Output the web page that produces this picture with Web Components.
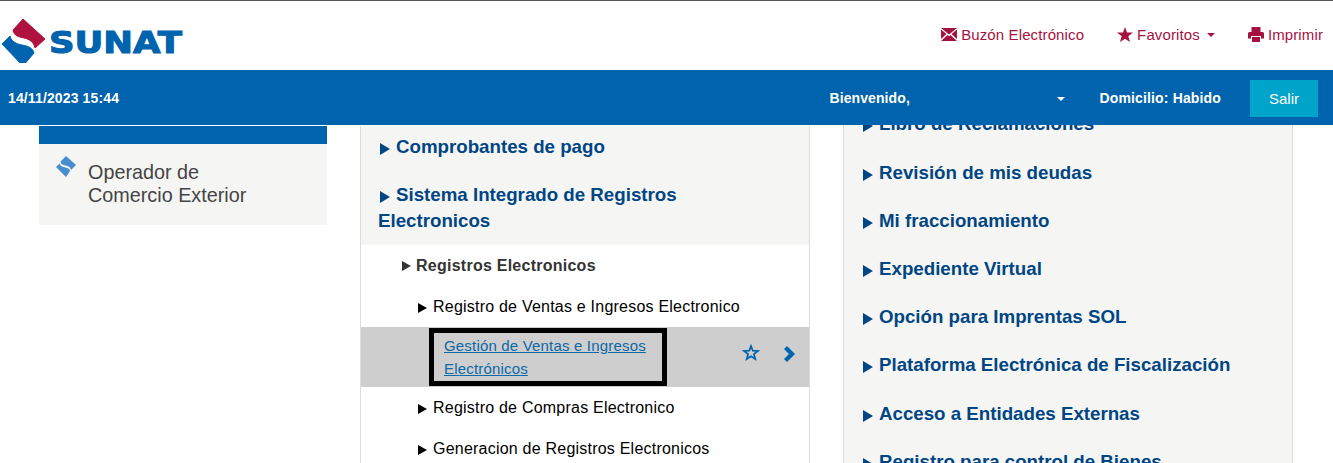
<!DOCTYPE html>
<html>
<head>
<meta charset="utf-8">
<title>SUNAT Operaciones en Linea</title>
<style>
    html, body { margin: 0; height: 463px; overflow: hidden; background: #fff; }
    body { font-family: "Liberation Sans", Arial, sans-serif; }
</style>
</head>
<body>
<sunat-header></sunat-header>
<menu-page>
    <side-card slot="left">Operador de<br>Comercio Exterior</side-card>

    <menu-column slot="middle">
        <menu-group>
            <menu-item level="1">Comprobantes de pago</menu-item>
            <menu-item level="1" last>Sistema Integrado de Registros Electronicos</menu-item>
        </menu-group>
        <menu-item level="2">Registros Electronicos</menu-item>
        <menu-item level="3">Registro de Ventas e Ingresos Electronico</menu-item>
        <active-row>Gestión de Ventas e Ingresos Electrónicos</active-row>
        <menu-item level="3">Registro de Compras Electronico</menu-item>
        <menu-item level="3">Generacion de Registros Electronicos</menu-item>
    </menu-column>

    <menu-column slot="right" panel>
        <menu-item level="1" side>Libro de Reclamaciones</menu-item>
        <menu-item level="1" side>Revisión de mis deudas</menu-item>
        <menu-item level="1" side>Mi fraccionamiento</menu-item>
        <menu-item level="1" side>Expediente Virtual</menu-item>
        <menu-item level="1" side>Opción para Imprentas SOL</menu-item>
        <menu-item level="1" side>Plataforma Electrónica de Fiscalización</menu-item>
        <menu-item level="1" side>Acceso a Entidades Externas</menu-item>
        <menu-item level="1" side>Registro para control de Bienes</menu-item>
    </menu-column>
</menu-page>

<script>
    // Top bar, laid over the scrolled page
    customElements.define('sunat-header', class extends HTMLElement {
        constructor() {
            super();
            const shadow = this.attachShadow({ mode: 'open' });
            shadow.innerHTML = `
            <style>
                :host { display: block; position: fixed; top: 0; left: 0; right: 0; z-index: 10; background: #fff; color: #a6123f; }
                .top { height: 69px; border-top: 1px solid #555; display: flex; justify-content: space-between; align-items: center; padding-right: 10px; }
                .logo { display: block; margin-top: -1px; }
                .links { display: flex; align-items: center; margin-top: -2px; font-size: 15px; letter-spacing: .12px; }
                .links span { display: flex; align-items: center; }
                .links svg { display: block; margin-right: 4px; }
                .mail { margin-right: 33px; }
                .fav { margin-right: 33px; }
                .caret { width: 0; height: 0; border: 4px solid transparent; border-top-color: currentColor; border-bottom: 0; margin-left: 7px; }
                .bar { height: 55px; background: #0063ad; color: #fff; font-weight: bold; font-size: 14px; display: flex; align-items: center; padding: 0 15px 0 8px; }
                .date { flex: 1; letter-spacing: .13px; }
                .welcome { width: 228px; letter-spacing: .1px; }
                .caret2 { width: 0; height: 0; border: 4px solid transparent; border-top-color: #fff; border-bottom: 0; margin-right: 34px; margin-top: 2px; }
                .dom { margin-right: 29px; letter-spacing: .15px; }
                .salir { width: 68px; height: 37px; background: #00a3c9; display: flex; align-items: center; justify-content: center; font-weight: normal; font-size: 15px; margin-top: 1px; }
            </style>
            <div class="top">
                <svg class="logo" width="190" height="56" viewBox="0 0 190 56">
                    <path fill="#b0123f" stroke="#b0123f" stroke-linejoin="round" d="M23 12 45 32 35 41C34 35 29 32 24 31 19 30 14 29 13 23Z"/>
                    <path fill="#0063ad" stroke="#0063ad" stroke-linejoin="round" d="M2 37 10 29C11 34 16 37 22 38 28 39 33 41 34 46L23 59Z"/>
                    <text x="49" y="46" font-family="DejaVu Sans" font-weight="bold" font-size="31" fill="#0063ad" stroke="#0063ad" stroke-width="1.100" textLength="133" lengthAdjust="spacingAndGlyphs">SUNAT</text>
                </svg>
                <div class="links">
                    <span class="mail">
                        <svg width="16" height="13" viewBox="0 0 16 13"><path fill="currentColor" d="M0 0H16L8 6.500ZM0 1.500 5.500 6 0 11ZM16 1.500V11L10.500 6ZM0 13 6.500 7 8 8.300 9.500 7 16 13Z"/></svg>
                        Buzón Electrónico
                    </span>
                    <span class="fav">
                        <svg width="16" height="15" viewBox="0 0 16 15"><path fill="currentColor" d="M8 0 10 5.400 16 5.600 11.300 9.200 13 15 8 11.700 3 15 4.700 9.200 0 5.600 6 5.400Z"/></svg>
                        Favoritos<i class="caret"></i>
                    </span>
                    <span>
                        <svg width="16" height="15" viewBox="0 0 16 15"><path fill="currentColor" fill-rule="evenodd" d="M3.500 0H12.500V5H3.500ZM1.500 5H14.500Q16 5 16 6.500V11.500H13V9H3V11.500H0V6.500Q0 5 1.500 5ZM4 10H12V15H4Z"/></svg>
                        Imprimir
                    </span>
                </div>
            </div>
            <div class="bar">
                <span class="date">14/11/2023 15:44</span>
                <span class="welcome">Bienvenido,</span>
                <i class="caret2"></i>
                <span class="dom">Domicilio: Habido</span>
                <span class="salir">Salir</span>
            </div>`;
        }
    });

    // Three columns under the bar
    customElements.define('menu-page', class extends HTMLElement {
        constructor() {
            super();
            const shadow = this.attachShadow({ mode: 'open' });
            shadow.innerHTML = `
            <style>
                :host { display: grid; grid-template-columns: 288px 450px 450px; column-gap: 33px; padding: 126px 0 0 39px; align-items: start; }
            </style>
            <slot name="left"></slot>
            <slot name="middle"></slot>
            <slot name="right"></slot>`;
        }
    });

    // Blue headed card on the left
    customElements.define('side-card', class extends HTMLElement {
        constructor() {
            super();
            const shadow = this.attachShadow({ mode: 'open' });
            shadow.innerHTML = `
            <style>
                :host { display: block; background: #f5f5f3; color: #444; font-size: 19.800px; line-height: 22.500px; }
                .head { height: 18px; background: #0063ad; }
                .body { display: flex; height: 81px; padding: 12px 0 0 17px; box-sizing: border-box; }
                svg { display: block; flex: none; margin-right: 11px; }
                p { margin: 5px 0 0; }
            </style>
            <div class="head"></div>
            <div class="body">
                <svg width="21" height="22" viewBox="0 0 21 22">
                    <path fill="#478ecf" d="M10 0 20 9 15 14C14.500 11 12 10 9.500 9.500 7 9 5 8.500 4.500 5.500ZM0 11 3.500 7.500C4 10 6.500 11 9.500 11.500 12 12 14 13 14 15L10 21Z"/>
                </svg>
                <p><slot></slot></p>
            </div>`;
        }
    });

    // Column of menu rows, white or panel grey
    customElements.define('menu-column', class extends HTMLElement {
        constructor() {
            super();
            const shadow = this.attachShadow({ mode: 'open' });
            shadow.innerHTML = `
            <style>
                :host { display: block; border: solid #ddd; border-width: 0 1px; height: 337px; overflow: hidden; }
                :host([panel]) { background: #f5f5f3; margin-top: -25.600px; height: 363px; }
            </style>
            <slot></slot>`;
        }
    });

    // Grey block at the head of a column
    customElements.define('menu-group', class extends HTMLElement {
        constructor() {
            super();
            const shadow = this.attachShadow({ mode: 'open' });
            shadow.innerHTML = `
            <style>
                :host { display: block; background: #f5f5f3; }
            </style>
            <slot></slot>`;
        }
    });

    // One menu row; level sets its size and indent
    customElements.define('menu-item', class extends HTMLElement {
        constructor() {
            super();
            const shadow = this.attachShadow({ mode: 'open' });
            shadow.innerHTML = `
            <style>
                :host { display: block; }
                .arrow { display: inline-block; width: 0; height: 0; border: solid transparent; border-left-color: currentColor; }
                :host([level="1"]) { color: #004584; font-weight: bold; font-size: 18.720px; line-height: 26px; padding: 8px 17px 14px; }
                :host([level="1"]) .arrow { border-width: 6px 0 6px 10px; margin: 0 6px 0 2px; vertical-align: -2px; }
                :host([level="1"][last]) { padding-bottom: 11px; }
                :host([level="1"][side]) { padding: 11px 17px 11.200px; }
                :host([level="2"]) { color: #333; font-weight: bold; font-size: 16px; letter-spacing: .25px; line-height: 20px; padding: 11px 0 10px 41px; }
                :host([level="2"]) .arrow { border-width: 5px 0 5px 9px; margin-right: 5px; }
                :host([level="3"]) { color: #000; font-size: 16px; letter-spacing: .22px; line-height: 20px; padding: 11px 0 10px 57px; }
                :host([level="3"]) .arrow { border-width: 5px 0 5px 9px; margin-right: 6px; vertical-align: -1px; }
            </style>
            <i class="arrow"></i><slot></slot>`;
        }
    });

    // The highlighted row with the black frame
    customElements.define('active-row', class extends HTMLElement {
        constructor() {
            super();
            const shadow = this.attachShadow({ mode: 'open' });
            shadow.innerHTML = `
            <style>
                :host { display: flex; align-items: center; height: 60px; background: #cecece; padding-left: 68px; color: #0a69a8; font-size: 15px; letter-spacing: .18px; line-height: 23px; }
                a { display: block; box-sizing: border-box; width: 238px; height: 58px; border: 5px solid #000; padding: 1px 10px; color: inherit; text-decoration: underline; }
                .star { display: block; margin: -9px 0 0 75px; }
                .next { display: block; margin: -6px 0 0 24px; }
            </style>
            <a href="#"><slot></slot></a>
            <svg class="star" width="18" height="17" viewBox="0 0 18 17"><path fill="none" stroke="#0063ad" stroke-width="1.700" d="M9 2 10.800 6.700 16 7 11.900 10.100 13.300 15 9 12.300 4.700 15 6.100 10.100 2 7 7.200 6.700Z"/></svg>
            <svg class="next" width="12" height="16" viewBox="0 0 12 16"><path fill="#0063ad" d="M0 3 3 0 11 8 3 16 0 13 5 8Z"/></svg>`;
        }
    });
</script>
</body>
</html>
